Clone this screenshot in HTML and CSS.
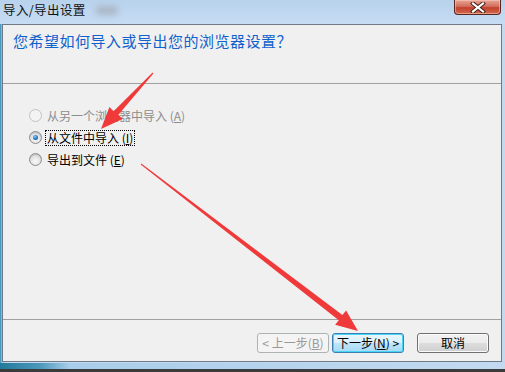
FILE: index.html
```html
<!DOCTYPE html>
<html lang="zh-CN">
<head>
    <meta charset="UTF-8">
    <title>导入/导出设置</title>
    <link rel="stylesheet" href="styles.css">
</head>
<body>
    <div class="window">
        <div class="titlebar">
            <span class="title">导入/导出设置</span>
            <span class="smudge"></span>
            <div class="close-btn">
                <svg width="16" height="11" viewBox="0 0 16 11">
                    <path d="M3 1.5 L13 9.5 M13 1.5 L3 9.5" stroke="#3a1a14" stroke-width="4" stroke-linecap="square"/>
                    <path d="M3 1.5 L13 9.5 M13 1.5 L3 9.5" stroke="#ffffff" stroke-width="2.2" stroke-linecap="square"/>
                </svg>
            </div>
        </div>
        <div class="client">
            <div class="header">
                <h1>您希望如何导入或导出您的浏览器设置？</h1>
            </div>
            <div class="options">
                <div class="option disabled">
                    <span class="radio"></span>
                    <span class="label">从另一个浏览器中导入 (<u>A</u>)</span>
                </div>
                <div class="option">
                    <span class="radio checked"></span>
                    <span class="label focus">从文件中导入 (<u>I</u>)</span>
                </div>
                <div class="option">
                    <span class="radio"></span>
                    <span class="label">导出到文件 (<u>E</u>)</span>
                </div>
            </div>
            <div class="footer">
                <button class="btn disabled">&lt; 上一步(<u>B</u>)</button>
                <button class="btn default">下一步(<u>N</u>) &gt;</button>
                <button class="btn cancel">取消</button>
            </div>
        </div>
        <div class="frame-bottom"></div>
    </div>

    <svg class="arrows" width="505" height="372" viewBox="0 0 505 372">
        <polygon fill="#f03a3a" points="153.4,73.4 152.6,72.6 113.6,111.2 109.4,106.9 101,129 122.6,119.1 118.4,114.8"/>
        <polygon fill="#f03a3a" points="141.3,163.6 140.7,164.4 338.8,320.3 335.1,324.7 358,331 346.1,310.5 342.4,314.9"/>
    </svg>
</body>
</html>
```

FILE: styles.css
```css
body {
    margin: 0;
    width: 505px;
    height: 372px;
    overflow: hidden;
    background-color: #3b3b3b;
    font-family: "Noto Sans CJK SC", "Microsoft YaHei", sans-serif;
    position: relative;
}

.window {
    display: flex;
    flex-direction: column;
    height: 372px;
    background: linear-gradient(to right, #2f8ab3 0, #9cc6e6 2px, #c2d9f1 6px);
}

.titlebar {
    height: 24px;
    display: flex;
    align-items: flex-start;
    padding-left: 3px;
    background: linear-gradient(#b8d2ed, #c6dcf3);
    position: relative;
}

.title {
    font-size: 12.5px;
    line-height: 20px;
    color: #111;
    letter-spacing: 0.4px;
}

.smudge {
    width: 22px;
    height: 9px;
    margin: 6px 0 0 10px;
    background-color: #a9b6c4;
    border-radius: 4px;
    filter: blur(3px);
}

.close-btn {
    position: absolute;
    right: 4px;
    top: 0;
    width: 45px;
    height: 14px;
    border: 1px solid #5a2622;
    border-top: none;
    border-radius: 0 0 4px 4px;
    background: linear-gradient(#e8a493 0, #d2705f 45%, #c2402c 55%, #d26a4f 100%);
    box-shadow: inset 0 0 0 1px rgba(255, 210, 200, 0.5);
    display: flex;
    justify-content: center;
    align-items: center;
}

.client {
    margin: 0 3px 0 2px;
    height: 337px;
    border: 1px solid #6f7a86;
    background-color: #f0f0f0;
    display: flex;
    flex-direction: column;
}

.header {
    height: 58px;
    border-bottom: 1px solid #a0a0a0;
    padding-left: 10px;
}

.header h1 {
    margin: 0;
    padding-top: 6px;
    font-size: 15px;
    font-weight: normal;
    line-height: 20px;
    color: #0f62cc;
    letter-spacing: 0.5px;
}

.options {
    height: 235px;
    box-sizing: border-box;
    padding: 21px 0 0 26px;
    display: flex;
    flex-direction: column;
}

.option {
    height: 22px;
    display: flex;
    align-items: center;
    font-size: 12px;
    color: #000;
}

.option.disabled {
    color: #8d8d8d;
}

.radio {
    width: 11px;
    height: 11px;
    border: 1px solid #8a8c8e;
    border-radius: 50%;
    background: radial-gradient(circle at 50% 65%, #f8f8f8 0, #dcdcdc 70%, #cfcfcf 100%);
    box-shadow: inset 0 1px 1px rgba(0, 0, 0, 0.15);
    position: relative;
    flex-shrink: 0;
}

.option.disabled .radio {
    border-color: #c0c2c4;
    background: #f3f3f3;
    box-shadow: none;
}

.radio.checked::after {
    content: "";
    position: absolute;
    left: 3px;
    top: 3px;
    width: 5px;
    height: 5px;
    border-radius: 50%;
    background: radial-gradient(circle at 40% 35%, #8fd0ff 0, #2a7fd0 45%, #0d3f86 100%);
}

.label {
    margin-left: 3px;
    padding: 0 1px;
    line-height: 14px;
    border: 1px dotted transparent;
}

.label.focus {
    border-color: #000;
}

.footer {
    flex: 1;
    border-top: 1px solid #a0a0a0;
    display: flex;
    justify-content: flex-end;
    align-items: flex-start;
    padding: 13px 12px 0 0;
}

.btn {
    width: 72px;
    height: 20px;
    padding: 0;
    margin: 0;
    font-family: inherit;
    font-size: 12px;
    line-height: 16px;
    color: #000;
    border: 1px solid #707070;
    border-radius: 3px;
    background: linear-gradient(#f2f2f2 0, #ebebeb 50%, #dddddd 51%, #cfcfcf 100%);
    box-shadow: inset 0 0 0 1px #fbfbfb;
}

.btn.disabled {
    color: #9a9a9a;
    border-color: #adb2b5;
    background: #f4f4f4;
    box-shadow: none;
}

.btn.default {
    margin-left: 3px;
    border-color: #3c7fb1;
    background: linear-gradient(#eaf6fd 0, #d9f0fc 50%, #bee6fd 51%, #a7d9f5 100%);
    box-shadow: inset 0 0 0 1px #48d6f8;
}

.btn.cancel {
    margin-left: 13px;
}

.frame-bottom {
    height: 9px;
    margin-top: 1px;
    background-color: #3b3b3b;
    position: relative;
}

.frame-bottom::before {
    content: "";
    position: absolute;
    left: 0;
    right: 0;
    top: 0;
    height: 6px;
    background: linear-gradient(to right, #237a9c 0, #4b98bc 40px, #a9cdea 70px, #c3daf1 100%);
}

.arrows {
    position: absolute;
    left: 0;
    top: 0;
    pointer-events: none;
}
```
